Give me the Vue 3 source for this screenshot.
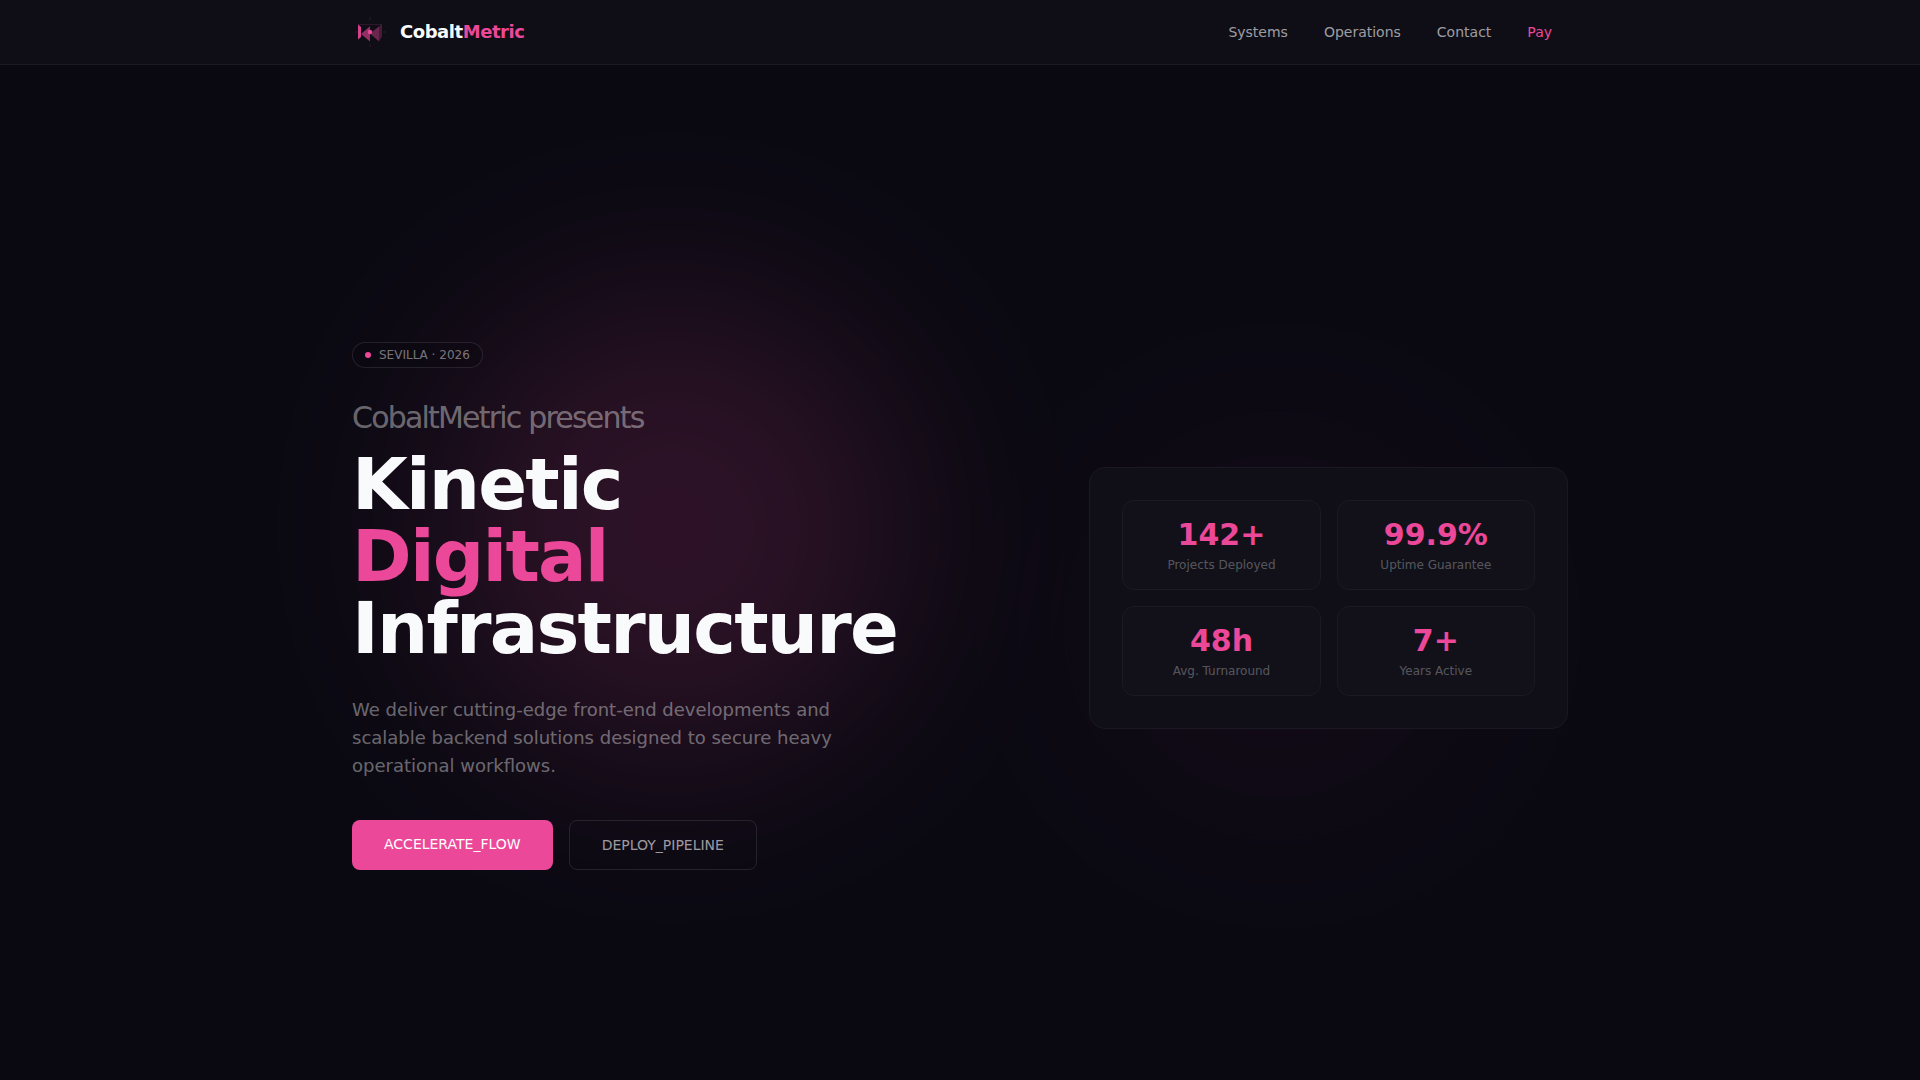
<script setup>
const links = [
  { label: 'Systems', href: '#systems' },
  { label: 'Operations', href: '#operations' },
  { label: 'Contact', href: '#contact' },
  { label: 'Pay', href: '#pay', accent: true },
]

const stats = [
  { value: '142+', label: 'Projects Deployed' },
  { value: '99.9%', label: 'Uptime Guarantee' },
  { value: '48h', label: 'Avg. Turnaround' },
  { value: '7+', label: 'Years Active' },
]
</script>

<template>
  <div class="page">
    <header class="topbar">
      <div class="container topbar-inner">
        <a class="brand" href="#top">
          <svg class="brand-mark" viewBox="0 0 36 36" aria-hidden="true">
            <g fill="#ec4899">
              <path d="M6 10.5 L9 13 V23 L6 25.5 Z" opacity=".9" />
              <path d="M9 20 L18 12.3 V27.5 Z" opacity=".6" />
              <path d="M18 19.5 L27 12.5 V27.5 Z" opacity=".42" />
              <path d="M27 12.5 L30 10.3 V22.5 L27 27.5 Z" opacity=".25" />
              <circle cx="18" cy="18" r="2.2" />
              <path d="M17 3 h2 v3 h-2 Z M17 30 h2 v3 h-2 Z M31 17 h3 v2 h-3 Z M3 17 h3 v2 h-3 Z" opacity=".08" />
            </g>
            <path d="M6 10.5 H30" fill="none" stroke="#ec4899" stroke-width="1" opacity=".15" />
          </svg>
          <span class="brand-name">Cobalt<span class="accent">Metric</span></span>
        </a>
        <nav class="nav" aria-label="Main">
          <a v-for="link in links" :key="link.label" :href="link.href" class="nav-link" :class="{ accent: link.accent }">{{ link.label }}</a>
        </nav>
      </div>
    </header>

    <main id="top" class="hero">
      <div class="glow glow-main"></div>
      <div class="glow glow-side"></div>
      <div class="container hero-grid">
        <section class="intro">
          <p class="pill"><span class="dot"></span>SEVILLA · 2026</p>
          <h1 class="title">
            <span class="presents">CobaltMetric presents</span>
            <span class="line">Kinetic</span>
            <span class="line accent">Digital</span>
            <span class="line">Infrastructure</span>
          </h1>
          <p class="lead">We deliver cutting-edge front-end developments and scalable backend solutions designed to secure heavy operational workflows.</p>
          <div class="actions">
            <a class="btn btn-primary" href="#accelerate">ACCELERATE_FLOW</a>
            <a class="btn btn-outline" href="#deploy">DEPLOY_PIPELINE</a>
          </div>
        </section>
        <section class="panel" aria-label="Key figures">
          <div v-for="stat in stats" :key="stat.label" class="stat">
            <div class="stat-value">{{ stat.value }}</div>
            <div class="stat-label">{{ stat.label }}</div>
          </div>
        </section>
      </div>
    </main>
  </div>
</template>

<style>
body {
  margin: 0;
  background: #0a0912;
}
</style>

<style scoped>
.page {
  display: flex;
  flex-direction: column;
  min-height: 100vh;
  color: #f9fafb;
  font-family: "DejaVu Sans", sans-serif;
}
.page * {
  box-sizing: border-box;
}
a {
  text-decoration: none;
}
.container {
  width: 100%;
  max-width: 1280px;
  margin: 0 auto;
  padding: 0 32px;
}
.topbar {
  position: relative;
  z-index: 1;
  background: #0f0e17;
  border-bottom: 1px solid #1b1a22;
}
.topbar-inner {
  display: flex;
  align-items: center;
  justify-content: space-between;
  height: 64px;
}
.brand {
  display: flex;
  align-items: center;
  gap: 12px;
  color: #f9fafb;
}
.brand-mark {
  width: 36px;
  height: 36px;
}
.brand-name {
  font-size: 18px;
  line-height: 28px;
  font-weight: 700;
  letter-spacing: -0.025em;
}
.nav {
  display: flex;
  gap: 4px;
}
.nav-link {
  padding: 8px 16px;
  font-size: 14px;
  line-height: 20px;
  color: rgba(255, 255, 255, 0.6);
}
.accent,
.nav-link.accent {
  color: #ec4899;
}
.hero {
  position: relative;
  display: flex;
  flex: 1;
  align-items: center;
  padding-top: 67px;
  overflow: hidden;
}
.glow {
  position: absolute;
  border-radius: 50%;
  background: #ec4899;
  filter: blur(100px);
}
.glow-main {
  top: 23%;
  left: 23%;
  width: 460px;
  height: 460px;
  opacity: 0.16;
}
.glow-side {
  right: 23%;
  bottom: 25%;
  width: 400px;
  height: 400px;
  opacity: 0.04;
}
.hero-grid {
  position: relative;
  display: grid;
  grid-template-columns: repeat(12, minmax(0, 1fr));
  gap: 48px;
  align-items: center;
}
.intro {
  grid-column: span 7;
}
.pill {
  display: flex;
  align-items: center;
  gap: 8px;
  width: fit-content;
  margin: 0 0 32px;
  padding: 4px 12px;
  border: 1px solid rgba(255, 255, 255, 0.1);
  border-radius: 13px;
  background: rgba(10, 8, 14, 0.4);
  font-size: 12px;
  line-height: 16px;
  color: rgba(255, 255, 255, 0.45);
}
.dot {
  width: 6px;
  height: 6px;
  border-radius: 50%;
  background: #ec4899;
}
.title {
  margin: 0 0 32px;
  font-size: 72px;
  line-height: 72px;
  font-weight: 700;
  letter-spacing: -0.025em;
}
.presents {
  display: block;
  margin-bottom: 12px;
  font-size: 30px;
  line-height: 36px;
  font-weight: 400;
  color: rgba(255, 255, 255, 0.4);
}
.line {
  display: block;
}
.lead {
  max-width: 512px;
  margin: 0 0 40px;
  font-size: 18px;
  line-height: 28px;
  color: rgba(255, 255, 255, 0.4);
}
.actions {
  display: flex;
  gap: 16px;
}
.btn {
  padding: 14px 32px;
  border-radius: 8px;
  font-size: 14px;
  line-height: 20px;
}
.btn-primary {
  background: #ec4899;
  color: #fff;
}
.btn-outline {
  border: 1px solid rgba(255, 255, 255, 0.1);
  color: rgba(255, 255, 255, 0.6);
}
.panel {
  grid-column: span 5;
  display: grid;
  grid-template-columns: 1fr 1fr;
  gap: 16px;
  margin-bottom: 16px;
  padding: 32px;
  border: 1px solid #1a1820;
  border-radius: 16px;
  background: #100e17;
}
.stat {
  padding: 16px;
  border: 1px solid #1b1a23;
  border-radius: 12px;
  background: #12111a;
  text-align: center;
}
.stat-value {
  margin-bottom: 4px;
  font-size: 30px;
  line-height: 36px;
  font-weight: 700;
  color: #ec4899;
}
.stat-label {
  font-size: 12px;
  line-height: 16px;
  color: rgba(255, 255, 255, 0.3);
}
</style>
